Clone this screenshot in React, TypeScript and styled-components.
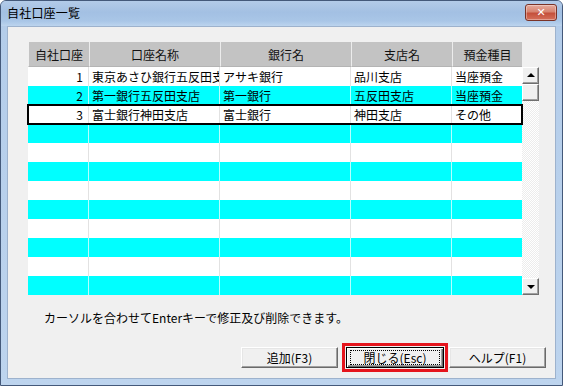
import React from 'react';
import styled, {createGlobalStyle} from 'styled-components';

type Account = {
    no: number;
    name: string;
    bank: string;
    branch: string;
    kind: string;
};

const accounts: Account[] = [
    {no: 1, name: '東京あさひ銀行五反田支店', bank: 'アサキ銀行', branch: '品川支店', kind: '当座預金'},
    {no: 2, name: '第一銀行五反田支店', bank: '第一銀行', branch: '五反田支店', kind: '当座預金'},
    {no: 3, name: '富士銀行神田支店', bank: '富士銀行', branch: '神田支店', kind: 'その他'},
];

const headers = ['自社口座', '口座名称', '銀行名', '支店名', '預金種目'];
const ROW_COUNT = 12;
const SELECTED = 2;
const COLS = '61px 131px 131px 101px 70px';

export default function App() {
    const rows = Array.from({length: ROW_COUNT}, (_, i) => accounts[i]);

    return (
        <>
            <GlobalStyle/>
            <Window>
                <TitleBar>
                    <Title>自社口座一覧</Title>
                    <CloseButton aria-label="閉じる">✕</CloseButton>
                </TitleBar>
                <Client>
                    <GridArea>
                        <Table>
                            <HeaderRow>
                                {headers.map(h => <HeaderCell key={h}>{h}</HeaderCell>)}
                            </HeaderRow>
                            {rows.map((acc, i) => {
                                const stripe = i % 2 === 1;
                                return (
                                    <Row key={i} $stripe={stripe} $selected={i === SELECTED}>
                                        <Cell $stripe={stripe} $right>{acc ? acc.no : ''}</Cell>
                                        <Cell $stripe={stripe}>{acc?.name}</Cell>
                                        <Cell $stripe={stripe}>{acc?.bank}</Cell>
                                        <Cell $stripe={stripe}>{acc?.branch}</Cell>
                                        <Cell $stripe={stripe}>{acc?.kind}</Cell>
                                    </Row>
                                );
                            })}
                        </Table>
                        <ScrollBar>
                            <ScrollButton><Arrow $dir="up"/></ScrollButton>
                            <Thumb/>
                            <Track/>
                            <ScrollButton><Arrow $dir="down"/></ScrollButton>
                        </ScrollBar>
                    </GridArea>

                    <Hint>カーソルを合わせてEnterキーで修正及び削除できます。</Hint>

                    <ButtonRow>
                        <Button>追加(F3)</Button>
                        <Highlight>
                            <Button $default><FocusLabel>閉じる(Esc)</FocusLabel></Button>
                        </Highlight>
                        <Button>ヘルプ(F1)</Button>
                    </ButtonRow>
                </Client>
            </Window>
        </>
    );
}

const GlobalStyle = createGlobalStyle`
  html, body {
    margin: 0;
    padding: 0;
    background: #ffffff;
  }

  body {
    font-family: "Noto Sans CJK JP", "Noto Sans", sans-serif;
    font-size: 12px;
    color: #000;
  }

  * {
    box-sizing: border-box;
  }
`

const Window = styled.div`
  width: 563px;
  height: 386px;
  display: flex;
  flex-direction: column;
  border: 1px solid #44597a;
  border-radius: 6px 6px 0 0;
  background: linear-gradient(to bottom, #a9c4e6 0, #b4cdea 30px, #bdd4ee 100%);
  overflow: hidden;
`

const TitleBar = styled.div`
  height: 25px;
  flex-shrink: 0;
  display: flex;
  align-items: center;
  justify-content: space-between;
  padding: 0 5px 2px 6px;
  background: linear-gradient(to bottom, #b3cbe8 0, #a3c0e3 45%, #a9c6e7 80%, #bcd4ee 100%);
`

const Title = styled.span`
  font-size: 12px;
  color: #000;
  letter-spacing: 0.2px;
`

const CloseButton = styled.div`
  width: 32px;
  height: 17px;
  display: flex;
  align-items: center;
  justify-content: center;
  border: 1px solid #7a3327;
  border-radius: 3px;
  background: linear-gradient(to bottom, #e6aa9c 0, #d78470 45%, #c4503b 55%, #d5705a 100%);
  color: #fff;
  font-size: 11px;
  font-weight: 700;
  font-family: "DejaVu Sans", sans-serif;
  box-shadow: inset 0 0 0 1px rgba(255, 255, 255, 0.35);
`

const Client = styled.div`
  flex: 1;
  margin: 0 6px 6px 6px;
  border: 1px solid #9db2cd;
  background: #f0f0f0;
  display: flex;
  flex-direction: column;
`

const GridArea = styled.div`
  display: flex;
  margin: 15px 0 0 20px;
`

const Table = styled.div`
  width: 494px;
  display: flex;
  flex-direction: column;
`

const HeaderRow = styled.div`
  display: grid;
  grid-template-columns: ${COLS};
  height: 25px;
`

const HeaderCell = styled.div`
  display: flex;
  align-items: center;
  justify-content: center;
  background: #c3c3c3;
  border-left: 1px solid #ececec;
  border-bottom: 1px solid #b4b4b4;
  font-size: 12px;
  color: #111;

  &:first-child {
    border-left-color: #f0f0f0;
  }
`

const Row = styled.div<{ $stripe: boolean; $selected: boolean }>`
  position: relative;
  display: grid;
  grid-template-columns: ${COLS};
  height: 19px;
  background: ${p => p.$stripe ? '#00ffff' : '#ffffff'};
  outline: ${p => p.$selected ? '2px solid #000' : 'none'};
  outline-offset: -1px;
  z-index: ${p => p.$selected ? 1 : 0};
`

const Cell = styled.div<{ $stripe: boolean; $right?: boolean }>`
  line-height: 19px;
  padding: ${p => p.$right ? '0 5px 0 0' : '0 0 0 3px'};
  text-align: ${p => p.$right ? 'right' : 'left'};
  white-space: nowrap;
  overflow: hidden;
  border-right: 1px solid ${p => p.$stripe ? '#b4ffff' : '#e2e2e2'};
  font-size: 12px;

  &:last-child {
    border-right: none;
  }
`

const ScrollBar = styled.div`
  width: 17px;
  display: flex;
  flex-direction: column;
  padding-top: 25px;
`

const ScrollButton = styled.div`
  width: 17px;
  height: 17px;
  display: flex;
  align-items: center;
  justify-content: center;
  background: #f0f0f0;
  border: 1px solid;
  border-color: #ffffff #6f6f6f #6f6f6f #ffffff;
  box-shadow: inset -1px -1px 0 #a0a0a0;
`

const Thumb = styled(ScrollButton)`
  height: 17px;
`

const Track = styled.div`
  flex: 1;
  background: repeating-conic-gradient(#ffffff 0 25%, #ececec 0 50%) 0 0 / 2px 2px;
`

const Arrow = styled.span<{ $dir: 'up' | 'down' }>`
  width: 0;
  height: 0;
  border-left: 4px solid transparent;
  border-right: 4px solid transparent;
  ${p => p.$dir === 'up'
          ? 'border-bottom: 4px solid #000; margin-top: -1px;'
          : 'border-top: 4px solid #000; margin-top: 1px;'}
`

const Hint = styled.p`
  margin: 15px 0 0 36px;
  line-height: 16px;
  font-size: 12px;
`

const ButtonRow = styled.div`
  display: flex;
  align-items: center;
  margin: 17px 0 0 233px;
  gap: 4px;

  & > :last-child {
    margin-left: -3px;
  }
`

const Button = styled.button<{ $default?: boolean }>`
  width: ${p => p.$default ? '98px' : '97px'};
  height: 21px;
  padding: 0;
  display: flex;
  align-items: stretch;
  justify-content: center;
  font-family: "Noto Sans CJK JP", "Noto Sans", sans-serif;
  font-size: 12px;
  line-height: 19px;
  color: #000;
  background: #f0f0f0;
  border: 1px solid;
  border-color: ${p => p.$default ? '#000' : '#ffffff #6a6a6a #6a6a6a #ffffff'};
  box-shadow: ${p => p.$default
          ? 'inset 1px 1px 0 #ffffff, inset -1px -1px 0 #6a6a6a, inset -2px -2px 0 #a0a0a0'
          : 'inset -1px -1px 0 #a0a0a0, inset 1px 1px 0 #e6e6e6'};
`

const Highlight = styled.div`
  border: 3px solid #e5141c;
  padding: 1px;
  display: flex;
`

const FocusLabel = styled.span`
  flex: 1;
  margin: 2px 3px;
  border: 1px dotted #000;
  line-height: 13px;
  display: flex;
  align-items: center;
  justify-content: center;
`
